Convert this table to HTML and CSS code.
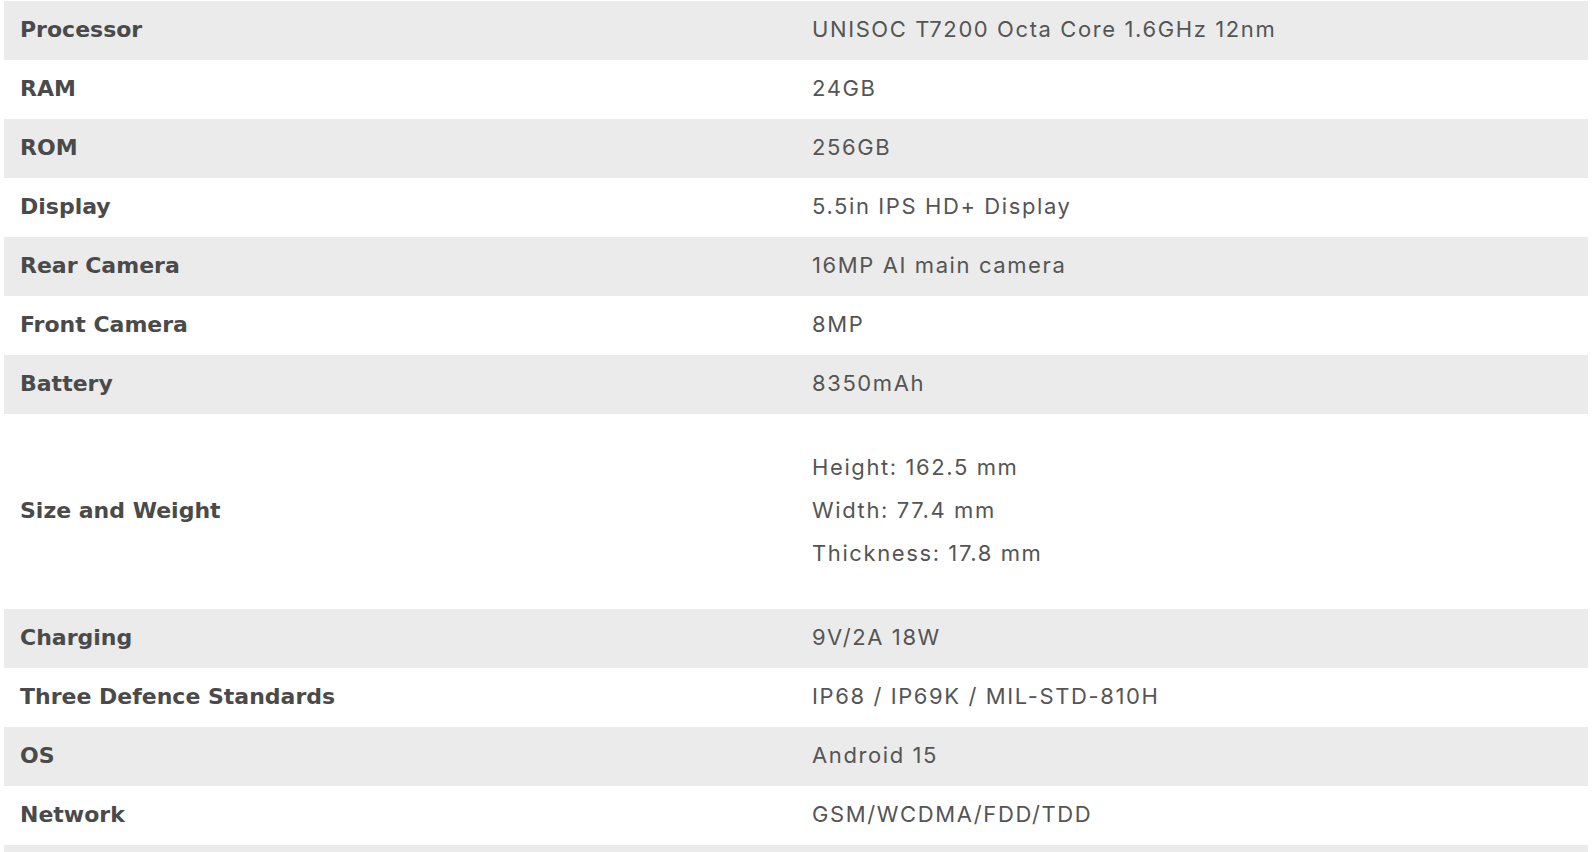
FILE: index.html
```html
<!DOCTYPE html>
<html lang="en">
<head>
<meta charset="utf-8">
<title>Specifications</title>
<link rel="stylesheet" href="styles.css">
</head>
<body>
<div class="specs">
  <table class="spec-table">
    <tbody>
      <tr class="alt"><td class="label">Processor</td><td class="value">UNISOC T7200 Octa Core 1.6GHz 12nm</td></tr>
      <tr><td class="label">RAM</td><td class="value">24GB</td></tr>
      <tr class="alt"><td class="label">ROM</td><td class="value">256GB</td></tr>
      <tr><td class="label">Display</td><td class="value">5.5in IPS HD+ Display</td></tr>
      <tr class="alt"><td class="label">Rear Camera</td><td class="value">16MP AI main camera</td></tr>
      <tr><td class="label">Front Camera</td><td class="value">8MP</td></tr>
      <tr class="alt"><td class="label">Battery</td><td class="value">8350mAh</td></tr>
      <tr><td class="label">Size and Weight</td><td class="value"><div class="multi"><div>Height: 162.5 mm</div><div>Width: 77.4 mm</div><div>Thickness: 17.8 mm</div></div></td></tr>
      <tr class="alt"><td class="label">Charging</td><td class="value">9V/2A 18W</td></tr>
      <tr><td class="label">Three Defence Standards</td><td class="value">IP68 / IP69K / MIL-STD-810H</td></tr>
      <tr class="alt"><td class="label">OS</td><td class="value">Android 15</td></tr>
      <tr><td class="label">Network</td><td class="value">GSM/WCDMA/FDD/TDD</td></tr>
      <tr class="alt"><td class="label">&nbsp;</td><td class="value">&nbsp;</td></tr>
    </tbody>
  </table>
</div>
</body>
</html>
```

FILE: styles.css
```css
html, body {
  margin: 0;
  padding: 0;
  background: #ffffff;
  overflow: hidden;
}
.specs {
  padding: 1px 4px 0 4px;
}
.spec-table {
  width: 1584px;
  border-collapse: collapse;
  table-layout: fixed;
}
.spec-table td {
  padding: 17px 16px 19px 16px;
  line-height: 23px;
  vertical-align: middle;
  width: 50%;
  white-space: nowrap;
}
.spec-table tr.alt td {
  background: #ebebeb;
}
.label {
  font-family: "DejaVu Sans", "Liberation Sans", sans-serif;
  font-size: 22px;
  font-weight: 700;
  color: #4a4a4a;
}
.value {
  font-family: Inter, "Liberation Sans", sans-serif;
  font-size: 22px;
  font-weight: 400;
  letter-spacing: 1.6px;
  color: #555555;
}
.multi {
  padding: 15px 0;
}
.multi div {
  line-height: 43px;
}
```
